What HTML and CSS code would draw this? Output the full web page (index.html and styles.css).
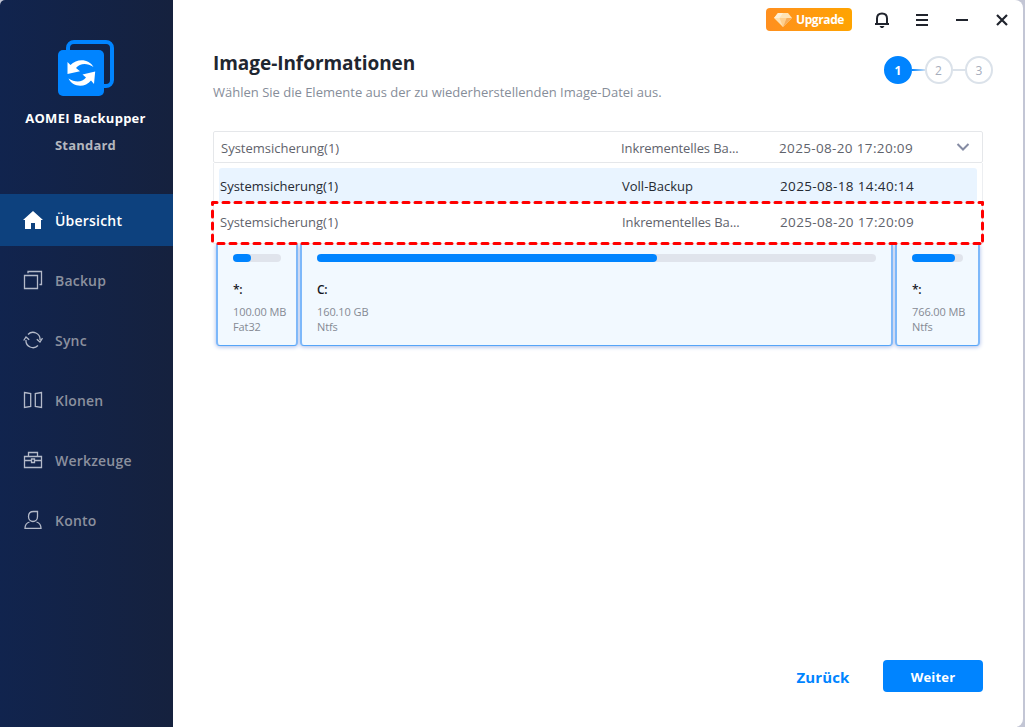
FILE: index.html
```html
<!DOCTYPE html>
<html lang="de">
<head>
<meta charset="utf-8">
<title>AOMEI Backupper</title>
<link rel="stylesheet" href="styles.css">
</head>
<body>
<div class="window">
	<div class="sidebar">
		<div class="brand">
			<svg class="logo" width="56" height="56" viewBox="0 0 56 56">
				<path d="M10 12V8a6 6 0 0 1 6-6h32a6 6 0 0 1 6 6v32a6 6 0 0 1-6 6h-4" fill="none" stroke="#0084ff" stroke-width="4"/>
				<rect x="0" y="10" width="46" height="46" rx="5" fill="#0084ff"/>
				<path d="M35.500 27C31 18.500 19 18 12.500 25L9.500 22 9.500 34 22 31.200 18 28C22 23 29 22.500 35.500 27Z" fill="#fff"/>
				<path d="M10.500 38.500C15 47.500 27 48 33 40.500L36 44 37.200 31.500 24.500 34.500 28 37.500C24 42.500 17 42.500 10.500 38.500Z" fill="#fff"/>
			</svg>
			<div class="brandName">AOMEI Backupper</div>
			<div class="edition">Standard</div>
		</div>
		<div class="nav">
			<div class="navItem active">
				<svg width="20" height="20" viewBox="0 0 20 20"><path d="M10 1L0 10h2v9h6v-6h4v6h6v-9h2Z" fill="#fff"/></svg>
				<span>Übersicht</span>
			</div>
			<div class="navItem">
				<svg width="20" height="20" viewBox="0 0 20 20"><path d="M1.500 5.500h13v13h-13zM5 3.200V1.500h13.500v13h-2"/></svg>
				<span>Backup</span>
			</div>
			<div class="navItem">
				<svg width="20" height="20" viewBox="0 0 20 20"><path d="M5 4.500a7 7 0 0 1 12 5.500M15 15.500A7 7 0 0 1 3 10M.7 10.500L3 7l3.200 2.800M13.800 9.200L17 12l2.500-3.800"/></svg>
				<span>Sync</span>
			</div>
			<div class="navItem">
				<svg width="20" height="20" viewBox="0 0 20 20"><path d="M1.500 2.500l6.200 1v13l-6.200 1zM18.500 2.500l-6.200 1v13l6.200 1z"/></svg>
				<span>Klonen</span>
			</div>
			<div class="navItem">
				<svg width="20" height="20" viewBox="0 0 20 20"><path d="M1.500 6.500h17v11h-17zM5.500 6V2.500h9V6M2 10.500h6M12 10.500h6M8.500 9h3v3.500h-3z"/></svg>
				<span>Werkzeuge</span>
			</div>
			<div class="navItem">
				<svg width="20" height="20" viewBox="0 0 20 20"><path d="M14.500 1.500h-4C7 1.500 5.500 3.500 5.500 6.500c0 3 2 5 4.500 5s4.500-2 4.500-5zM6.500 12C3.500 13 2 15 2 18.300h16c0-3.300-1.500-5.300-4.500-6.300"/></svg>
				<span>Konto</span>
			</div>
		</div>
	</div>

	<div class="main">
		<div class="titleBar">
			<div class="upgrade">
				<svg width="18" height="14" viewBox="0 0 18 14">
					<path d="M4 0h10l4 5-9 9-9-9Z" fill="#ffe3b5"/>
					<path d="M4 0L0 5h5.500L9 0Z" fill="#fff0d6"/>
					<path d="M5.500 5h7L9 14Z" fill="#ffcf8d"/>
					<path d="M12.500 5H18l-9 9Z" fill="#f8ad59"/>
				</svg>
				<span>Upgrade</span>
			</div>
			<svg class="winIcon bell" width="16" height="16" viewBox="0 0 16 16"><path d="M3 12V6.500C3 3.500 5 1.500 8 1.500s5 2 5 5V12M1 12h14" /><path d="M5.500 14h5L9 16H7Z" class="solid"/></svg>
			<svg class="winIcon" width="14" height="14" viewBox="0 0 14 14"><path d="M1 2h12M1 7h12M1 12h12"/></svg>
			<svg class="winIcon" width="14" height="14" viewBox="0 0 14 14"><path d="M1 7h12"/></svg>
			<svg class="winIcon" width="14" height="14" viewBox="0 0 14 14"><path d="M2 2l10 10M12 2L2 12" stroke-width="2.200"/></svg>
		</div>

		<div class="heading">
			<div>
				<h1>Image-Informationen</h1>
				<p>Wählen Sie die Elemente aus der zu wiederherstellenden Image-Datei aus.</p>
			</div>
			<div class="steps">
				<span class="step current">1</span>
				<span class="line first"></span>
				<span class="step">2</span>
				<span class="line"></span>
				<span class="step">3</span>
			</div>
		</div>

		<div class="picker">
			<div class="row selected">
				<span class="name">Systemsicherung(1)</span>
				<span class="type inc">Inkrementelles Ba...</span>
				<span class="date">2025-08-20 17:20:09</span>
				<svg width="14" height="10" viewBox="0 0 14 10"><path d="M1.500 2L7 7.500 12.500 2" fill="none" stroke="#858ba3" stroke-width="2"/></svg>
			</div>
			<!-- open dropdown -->
			<div class="dropdown">
				<div class="row hover">
					<span class="name">Systemsicherung(1)</span>
					<span class="type">Voll-Backup</span>
					<span class="date">2025-08-18 14:40:14</span>
				</div>
				<div class="row">
					<span class="name">Systemsicherung(1)</span>
					<span class="type inc">Inkrementelles Ba...</span>
					<span class="date">2025-08-20 17:20:09</span>
				</div>
				<svg class="marker" width="775" height="46" viewBox="0 0 775 46">
					<path d="M3 3.500H7M13 3.500H772.500"/>
					<path d="M8 44.500H771"/>
					<path d="M2.500 3.500v2M2.500 12V43M772.500 3.500v2M772.500 12V43"/>
				</svg>
			</div>
		</div>

		<div class="disks">
			<div class="disk small">
				<div class="bar"><div class="fill" style="width:37.5%"></div></div>
				<div class="letter">*:</div>
				<div class="info">100.00 MB<br>Fat32</div>
			</div>
			<div class="disk middle">
				<div class="bar"><div class="fill" style="width:60.9%"></div></div>
				<div class="letter">C:</div>
				<div class="info">160.10 GB<br>Ntfs</div>
			</div>
			<div class="disk last">
				<div class="bar"><div class="fill" style="width:84.5%"></div></div>
				<div class="letter">*:</div>
				<div class="info">766.00 MB<br>Ntfs</div>
			</div>
		</div>

		<div class="footer">
			<button class="back">Zurück</button>
			<button class="next">Weiter</button>
		</div>
	</div>
</div>
</body>
</html>
```
FILE: styles.css
```css
*{
	box-sizing:border-box;
}
body{
	margin:0;
	height:727px;
	overflow:hidden;
	background:#c3c6d5;
	font-family:"Open Sans","Noto Sans",sans-serif;
}
.window{
	display:flex;
	width:1023px;
	height:727px;
	border-radius:5px 8px 8px 0;
	overflow:hidden;
	background:#fff;
}
.sidebar{
	width:173px;
	background:linear-gradient(90deg,#11244e,#15213e);
}
.brand{
	height:194px;
	padding-top:40px;
	text-align:center;
	font-weight:bold;
	color:#fff;
}
.logo{
	display:block;
	margin:0 auto 0 58px;
}
.brandName{
	margin-top:12px;
	padding-right:2px;
	font-size:13px;
	line-height:20px;
	letter-spacing:0.27px;
}
.edition{
	margin-top:7px;
	padding-right:2px;
	font-size:13px;
	line-height:20px;
	letter-spacing:0.2px;
	color:#b4b7bf;
}
.navItem{
	display:flex;
	align-items:center;
	gap:12px;
	height:52px;
	margin-bottom:8px;
	padding-left:23px;
	font-size:14px;
	font-weight:600;
	letter-spacing:0.2px;
	color:#8b909e;
}
.navItem svg{
	fill:none;
	stroke:#b4bac9;
	stroke-width:1.3;
}
.navItem.active{
	color:#fff;
	background:#0d417e;
}
.navItem.active svg{
	stroke:none;
}
.main{
	flex:1;
	display:flex;
	flex-direction:column;
	padding:0 40px 35px;
}
.titleBar{
	display:flex;
	align-items:center;
	justify-content:flex-end;
	gap:26px;
	height:40px;
	margin-right:-26px;
}
.upgrade{
	display:flex;
	align-items:center;
	gap:4px;
	width:86px;
	height:23px;
	margin:-1px -4px 0 0;
	padding-left:8px;
	border-radius:4px;
	background:linear-gradient(90deg,#ff8f1f,#ffa400);
	color:#fff;
	font-size:12px;
	font-weight:bold;
	letter-spacing:-0.4px;
}
.winIcon{
	fill:none;
	stroke:#20242d;
	stroke-width:2;
}
.bell{
	margin-right:-1px;
}
.winIcon .solid{
	fill:#20242d;
	stroke:none;
}
.heading{
	display:flex;
	justify-content:space-between;
	height:91px;
}
h1{
	margin:9px 0 0;
	font-size:19px;
	line-height:28px;
	letter-spacing:-0.05px;
	color:#1f2630;
}
p{
	margin:5px 0 0;
	font-size:13px;
	line-height:20px;
	color:#868d99;
}
.steps{
	display:flex;
	align-items:center;
	height:28px;
	margin:16px -10px 0 0;
}
.step{
	width:28px;
	height:28px;
	border:2px solid #dbe2ea;
	border-radius:50%;
	text-align:center;
	font-size:12px;
	line-height:25px;
	color:#a6adbc;
}
.step.current{
	border-color:#0084ff;
	background:#0084ff;
	color:#fff;
	font-weight:bold;
}
.line{
	width:12.5px;
	height:2px;
	background:#dbe2ea;
}
.line.first{
	background:linear-gradient(90deg,#0084ff,#cfe0f2);
}
.picker{
	position:relative;
	width:770px;
	height:113px;
	z-index:1;
}
.row{
	display:flex;
	align-items:center;
	height:36px;
	padding:2px 0 0 1px;
	font-size:13px;
	color:#5f636c;
	white-space:nowrap;
}
.row .name{
	width:402px;
}
.row .type{
	width:158px;
}
.row .inc{
	letter-spacing:-0.1px;
}
.row .date{
	width:177px;
	font-size:13.5px;
	letter-spacing:0.35px;
}
.row.selected{
	height:32px;
	padding-left:7px;
	border:1px solid #e5e7ea;
	border-radius:2px;
}
.row.selected .name{
	width:400px;
}
.row.selected svg{
	margin-top:-2px;
}
.dropdown{
	position:absolute;
	top:32px;
	left:0;
	width:770px;
	height:81px;
	padding:5px;
	border:1px solid #eceef1;
	border-top:0;
	background:#fff;
}
.row.hover{
	height:35px;
	padding-top:1px;
	border-radius:3px;
	background:#e9f4ff;
	color:#252a33;
}
.marker{
	position:absolute;
	left:-4px;
	top:36px;
	fill:none;
	stroke:#ff0000;
	stroke-width:3;
	stroke-linecap:round;
	stroke-dasharray:6 6;
}
.disks{
	display:flex;
	gap:3px;
	width:764px;
	height:102px;
	margin-left:3px;
}
.disk{
	flex:1;
	padding:10px 15px 0;
	border:2px solid #7db8fa;
	border-top:0;
	border-bottom:1px solid #55a5f8;
	border-radius:0 0 4px 4px;
	box-shadow:0 1px 4px #a9bbe8;
	background:#f2f9ff;
}
.disk.small{
	flex:none;
	width:82px;
}
.disk.middle{
	margin:0 -1px;
}
.disk.last{
	flex:none;
	width:85px;
}
.bar{
	height:8px;
	border-radius:4px;
	background:#e0e4ec;
}
.small .bar{
	width:48px;
}
.last .bar{
	width:51px;
}
.fill{
	height:8px;
	border-radius:4px;
	background:#0084ff;
}
.letter{
	margin-top:20px;
	font-size:12px;
	font-weight:600;
	line-height:16px;
	letter-spacing:-0.3px;
	color:#15181e;
}
.info{
	margin-top:6px;
	font-size:11px;
	line-height:15px;
	letter-spacing:-0.1px;
	color:#858a94;
	white-space:nowrap;
}
.footer{
	display:flex;
	justify-content:flex-end;
	gap:20px;
	margin-top:auto;
}
button{
	height:32px;
	padding:2px 0 0;
	border:0;
	border-radius:4px;
	font-family:inherit;
	font-weight:bold;
}
.back{
	width:80px;
	background:none;
	font-size:15px;
	letter-spacing:0.1px;
	color:#0084ff;
}
.next{
	width:100px;
	background:#0084ff;
	font-size:13px;
	letter-spacing:0.2px;
	color:#fff;
}
```
